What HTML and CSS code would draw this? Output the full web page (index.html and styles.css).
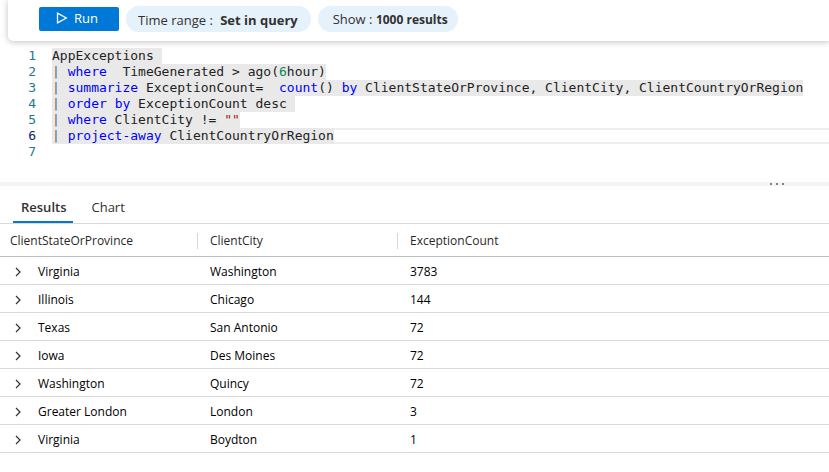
FILE: index.html
```
<!DOCTYPE html>
<html lang="en">

<head>
    <meta charset="UTF-8">
    <meta name="viewport" content="width=device-width, initial-scale=1.0">
    <title>Logs</title>
    <link rel="stylesheet" href="styles.css">
</head>

<body>
    <!-- Query toolbar -->
    <header class="toolbar">
        <button class="run-btn" type="button">
            <svg class="run-icon" viewBox="0 0 12 12" aria-hidden="true"><path d="M1.5 1.2v9.6L10.3 6z"/></svg>
            Run
        </button>
        <button class="pill" type="button">Time range : <b>Set in query</b></button>
        <button class="pill pill-show" type="button">Show : <b>1000 results</b></button>
    </header>

    <!-- Query editor -->
    <section class="editor" aria-label="Query editor">
        <div class="line"><span class="num">1</span><code><span class="sel">AppExceptions </span></code></div>
        <div class="line"><span class="num">2</span><code><span class="sel"><i>|</i> <span class="kw">where</span>  TimeGenerated &gt; ago(<span class="lit">6</span>hour)</span></code></div>
        <div class="line"><span class="num">3</span><code><span class="sel"><i>|</i> <span class="kw">summarize</span> ExceptionCount=  <span class="kw">count</span>() <span class="kw">by</span> ClientStateOrProvince, ClientCity, ClientCountryOrRegion</span></code></div>
        <div class="line"><span class="num">4</span><code><span class="sel"><i>|</i> <span class="kw">order</span> <span class="kw">by</span> ExceptionCount desc </span></code></div>
        <div class="line"><span class="num">5</span><code><span class="sel"><i>|</i> <span class="kw">where</span> ClientCity != <span class="str">""</span></span></code></div>
        <div class="line current"><span class="num">6</span><code><span class="sel"><i>|</i> <span class="kw">project-away</span> ClientCountryOrRegion</span></code></div>
        <div class="line"><span class="num">7</span><code></code></div>
    </section>

    <div class="splitter">
        <span class="dot"></span>
        <span class="dot"></span>
        <span class="dot"></span>
    </div>

    <!-- Results -->
    <nav class="tabs">
        <button class="tab active" type="button">Results</button>
        <button class="tab" type="button">Chart</button>
    </nav>

    <table class="results">
        <thead>
            <tr>
                <th><span>ClientStateOrProvince</span></th>
                <th><span>ClientCity</span></th>
                <th>ExceptionCount</th>
            </tr>
        </thead>
        <tbody>
            <tr>
                <td><button class="expand" type="button" aria-label="Expand row"><svg viewBox="0 0 8 10"><path d="M2 1l4 4-4 4"/></svg></button>Virginia</td>
                <td>Washington</td>
                <td>3783</td>
            </tr>
            <tr>
                <td><button class="expand" type="button" aria-label="Expand row"><svg viewBox="0 0 8 10"><path d="M2 1l4 4-4 4"/></svg></button>Illinois</td>
                <td>Chicago</td>
                <td>144</td>
            </tr>
            <tr>
                <td><button class="expand" type="button" aria-label="Expand row"><svg viewBox="0 0 8 10"><path d="M2 1l4 4-4 4"/></svg></button>Texas</td>
                <td>San Antonio</td>
                <td>72</td>
            </tr>
            <tr>
                <td><button class="expand" type="button" aria-label="Expand row"><svg viewBox="0 0 8 10"><path d="M2 1l4 4-4 4"/></svg></button>Iowa</td>
                <td>Des Moines</td>
                <td>72</td>
            </tr>
            <tr>
                <td><button class="expand" type="button" aria-label="Expand row"><svg viewBox="0 0 8 10"><path d="M2 1l4 4-4 4"/></svg></button>Washington</td>
                <td>Quincy</td>
                <td>72</td>
            </tr>
            <tr>
                <td><button class="expand" type="button" aria-label="Expand row"><svg viewBox="0 0 8 10"><path d="M2 1l4 4-4 4"/></svg></button>Greater London</td>
                <td>London</td>
                <td>3</td>
            </tr>
            <tr>
                <td><button class="expand" type="button" aria-label="Expand row"><svg viewBox="0 0 8 10"><path d="M2 1l4 4-4 4"/></svg></button>Virginia</td>
                <td>Boydton</td>
                <td>1</td>
            </tr>
        </tbody>
    </table>
</body>

</html>
```
FILE: styles.css
```
* {
    box-sizing: border-box;
}

body {
    margin: 0;
    background-color: #fff;
    color: #000;
    font-family: "Segoe UI", "Open Sans", "Noto Sans", sans-serif;
    font-size: 12px;
}

button {
    border: none;
    background: none;
    padding: 0;
    font-family: inherit;
    color: inherit;
    cursor: pointer;
}

/* Toolbar */
.toolbar {
    display: flex;
    align-items: center;
    gap: 7px;
    margin-left: 8px;
    padding: 6px 0 9px 31px;
    border-bottom-left-radius: 5px;
    box-shadow: 0 1px 6px rgba(0, 0, 0, 0.25);
}

.run-btn {
    display: flex;
    align-items: center;
    justify-content: center;
    gap: 6px;
    width: 80px;
    height: 24px;
    padding: 0 4px 2px 0;
    border-radius: 2px;
    background-color: #0078d7;
    color: #fff;
    font-size: 13px;
    font-weight: 500;
}

.run-icon {
    width: 12px;
    height: 12px;
    fill: none;
    stroke: #fff;
    stroke-width: 1.3;
}

.pill {
    height: 26px;
    padding: 2px 13px 0 12px;
    border-radius: 13px;
    background-color: #e5f1fb;
    color: #323130;
    font-size: 13px;
    white-space: nowrap;
}

.pill b {
    margin-left: 4px;
    font-weight: 700;
}

.pill-show {
    padding: 0 10px 0 15px;
}

.pill-show b {
    margin-left: 0;
    font-size: 12px;
}

/* Editor */
.editor {
    padding: 7px 0 22px;
    font-family: Consolas, "DejaVu Sans Mono", monospace;
    font-size: 13px;
    line-height: 16px;
}

.line {
    display: flex;
    height: 16px;
}

.num {
    width: 36px;
    margin-right: 16px;
    text-align: right;
    color: #237893;
}

.line code {
    flex: 1;
    font-family: inherit;
    white-space: pre;
    color: #222;
}

.sel {
    display: inline-block;
    height: 16px;
    background-color: #e9e9e9;
}

.sel i {
    font-style: normal;
    color: #666;
}

.kw {
    color: #0000ff;
}

.lit {
    color: #098658;
}

.str {
    color: #a31515;
}

.current .num {
    color: #0b216f;
}

.current code {
    box-shadow: inset 0 2px #eee, inset 0 -2px #eee;
}

.splitter {
    display: flex;
    justify-content: flex-end;
    align-items: center;
    gap: 4px;
    height: 4px;
    padding-right: 45px;
    background-color: #f4f4f4;
}

.dot {
    width: 2px;
    height: 2px;
    background-color: #808080;
}

/* Result tabs */
.tabs {
    display: flex;
    gap: 10px;
    padding: 5px 13px 0;
    border-bottom: 1px solid #dadada;
}

.tab {
    height: 32px;
    padding: 2px 7px 0 8px;
    border-bottom: 2px solid transparent;
    color: #323130;
    font-size: 13px;
}

.tab.active {
    border-bottom-color: #0078d4;
    font-weight: 600;
}

/* Result grid */
.results {
    width: 100%;
    table-layout: fixed;
    border-collapse: separate;
    border-spacing: 0;
}

.results th {
    height: 33px;
    padding: 1px 2px 0 10px;
    border-bottom: 1px solid #b9c0c7;
    color: #292827;
    font-weight: 500;
    text-align: left;
}

.results th:nth-child(1),
.results th:nth-child(2) {
    width: 200px;
}

.results th span {
    display: block;
    border-right: 1px solid #d6d6d6;
    line-height: 16px;
}

.results td {
    height: 28px;
    padding: 2px 10px 0;
    border-bottom: 1px solid #d9d9d9;
}

.expand {
    width: 16px;
    height: 16px;
    margin-right: 12px;
    vertical-align: middle;
}

.expand svg {
    display: block;
    width: 8px;
    height: 10px;
    margin: 0 auto;
    fill: none;
    stroke: #323130;
    stroke-width: 1.2;
}
```
